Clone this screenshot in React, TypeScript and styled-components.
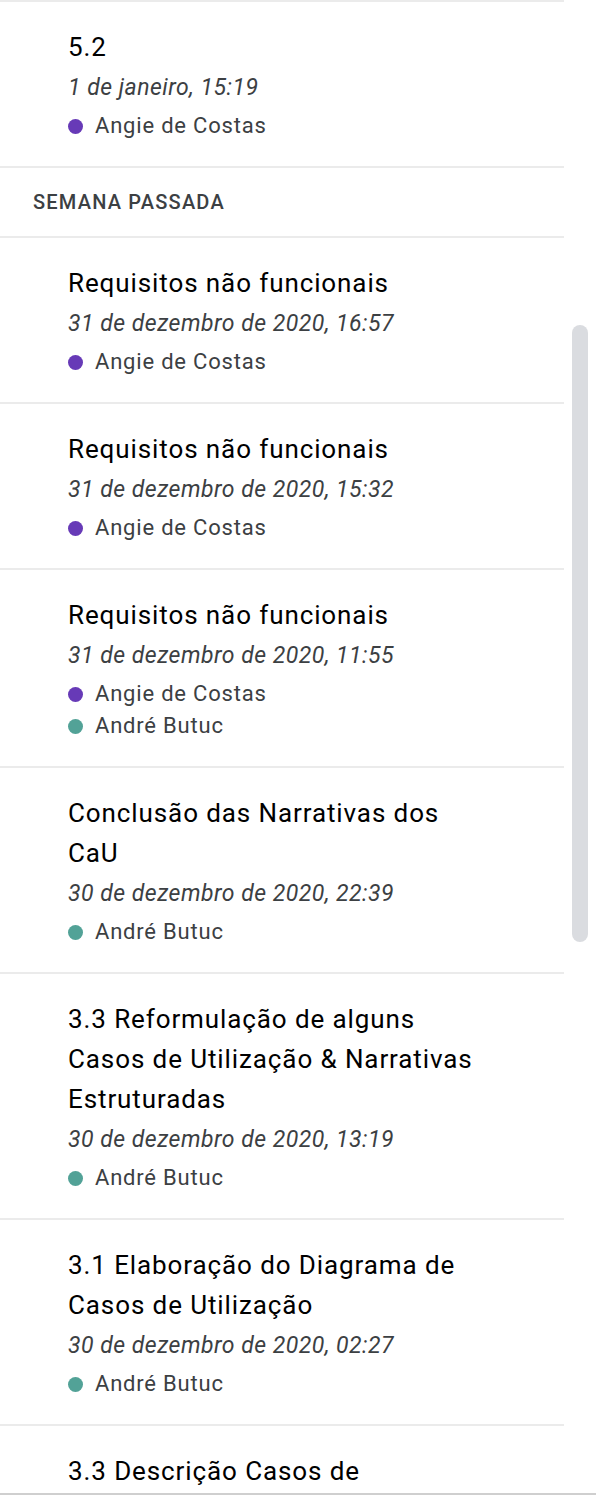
import React from "react";
import styled, { createGlobalStyle } from "styled-components";

const Global = createGlobalStyle`
  html, body { margin: 0; padding: 0; background: #fff; }
  body { font-family: Roboto, "Noto Sans", Arial, sans-serif; }
`;

const Panel = styled.div`
  display: flex;
  height: 1493px;
  overflow: hidden;
  border-bottom: 2px solid #cfcfcf;
  background: #fff;
`;

const List = styled.div`
  width: 564px;
  flex: none;
`;

const Track = styled.div`
  flex: 1;
  padding-left: 8px;
  padding-top: 325px;
`;

const Thumb = styled.div`
  width: 16px;
  height: 617px;
  border-radius: 8px;
  background: #dadce0;
`;

const Item = styled.div`
  border-top: 2px solid #ebebeb;
  padding: 25px 84px 24px 68px;
`;

const Title = styled.div`
  font-size: 26px;
  line-height: 40px;
  letter-spacing: 0.9px;
  color: #000;
  font-weight: 400;
`;

const DateLine = styled.div`
  font-size: 23px;
  line-height: 42px;
  letter-spacing: 0.5px;
  font-style: italic;
  color: #3c4043;
`;

const Authors = styled.div`
  margin-top: 1px;
  display: flex;
  flex-direction: column;
`;

const Author = styled.div`
  display: flex;
  align-items: center;
  gap: 12px;
  font-size: 22px;
  line-height: 32px;
  letter-spacing: 0.8px;
  color: #3c4043;
`;

const Dot = styled.span<{ $color: string }>`
  width: 15px;
  height: 15px;
  border-radius: 50%;
  background: ${(p) => p.$color};
  flex: none;
`;

const Section = styled.div`
  border-top: 2px solid #ebebeb;
  padding: 18px 33px;
  font-size: 20px;
  line-height: 32px;
  font-weight: 500;
  color: #3c4043;
  letter-spacing: 1.2px;
`;

const COLORS: Record<string, string> = {
  "Angie de Costas": "#673ab7",
  "André Butuc": "#52a297",
};

type Entry = { title: string; date: string; authors: string[] };

const first: Entry = { title: "5.2", date: "1 de janeiro, 15:19", authors: ["Angie de Costas"] };

const lastWeek: Entry[] = [
  { title: "Requisitos não funcionais", date: "31 de dezembro de 2020, 16:57", authors: ["Angie de Costas"] },
  { title: "Requisitos não funcionais", date: "31 de dezembro de 2020, 15:32", authors: ["Angie de Costas"] },
  { title: "Requisitos não funcionais", date: "31 de dezembro de 2020, 11:55", authors: ["Angie de Costas", "André Butuc"] },
  { title: "Conclusão das Narrativas dos CaU", date: "30 de dezembro de 2020, 22:39", authors: ["André Butuc"] },
  { title: "3.3 Reformulação de alguns Casos de Utilização & Narrativas Estruturadas", date: "30 de dezembro de 2020, 13:19", authors: ["André Butuc"] },
  { title: "3.1 Elaboração do Diagrama de Casos de Utilização", date: "30 de dezembro de 2020, 02:27", authors: ["André Butuc"] },
  { title: "3.3 Descrição Casos de Utilização", date: "29 de dezembro de 2020, 20:10", authors: ["André Butuc"] },
];

const VersionItem = ({ e }: { e: Entry }) => (
  <Item>
    <Title>{e.title}</Title>
    <DateLine>{e.date}</DateLine>
    <Authors>
      {e.authors.map((a) => (
        <Author key={a}>
          <Dot $color={COLORS[a]} />
          {a}
        </Author>
      ))}
    </Authors>
  </Item>
);

export default function App() {
  return (
    <>
      <Global />
      <Panel>
        <List>
          <VersionItem e={first} />
          <Section>SEMANA PASSADA</Section>
          {lastWeek.map((e, i) => (
            <VersionItem key={i} e={e} />
          ))}
        </List>
        <Track>
          <Thumb />
        </Track>
      </Panel>
    </>
  );
}
